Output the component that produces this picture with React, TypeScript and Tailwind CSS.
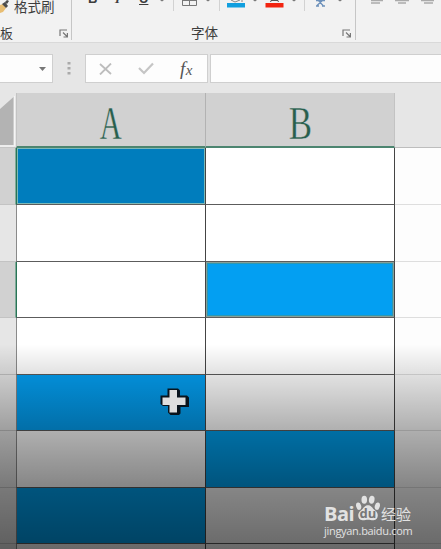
import React from "react";
import clsx from "clsx";

type RowData = {
  height: string;
  selected?: boolean;
  a: string;
  b: string;
};

const rows: RowData[] = [
  {
    height: "h-[57px]",
    selected: true,
    a: "bg-[#007dbd] shadow-[inset_0_0_0_1px_#7db9b8]",
    b: "bg-white",
  },
  { height: "h-[57px]", a: "bg-white", b: "bg-white" },
  {
    height: "h-[56px]",
    selected: true,
    a: "bg-white",
    b: "bg-[#039ff2] shadow-[inset_0_0_0_1px_#86a09a,inset_0_0_0_2px_#2f97b0]",
  },
  { height: "h-[57px]", a: "bg-white", b: "bg-white" },
  { height: "h-[56px]", a: "bg-[#03a0f3]", b: "bg-white" },
  { height: "h-[57px]", a: "bg-white", b: "bg-[#00a0ee]" },
  { height: "h-[56px]", a: "bg-[#00a0ee]", b: "bg-white" },
  { height: "h-[6px]", a: "bg-white", b: "bg-white" },
];

const Launcher = () => (
  <svg width="10" height="9" viewBox="0 0 10 9" fill="none" stroke="#777" strokeWidth="1.2">
    <path d="M1 7V1h7" />
    <path d="M4 3.5l4 4M8.4 4v4H4.5" />
  </svg>
);

const Caret = () => (
  <svg width="4" height="2" viewBox="0 0 4 2" fill="#777">
    <path d="M0 0h4L2 1.500z" />
  </svg>
);

const ClipboardGroup = () => (
  <div className="flex h-[40px] w-[72px] flex-col justify-between border-r border-[#c6c6c6]">
    <div className="flex gap-[5px]">
      <svg width="9" height="14" viewBox="0 0 9 14">
        <path d="M0 5l3-1 3 4-3 4-3 1z" fill="#e8bd72" />
        <path d="M2 4l3-2 3 4-2 2zM5 2l2-2 2 1-2 3z" fill="#4b4b4b" />
      </svg>
      <span className="text-[13.5px] leading-[15px]">格式刷</span>
    </div>
    <div className="flex items-center justify-between pr-[2px]">
      <span className="leading-[13px]">板</span>
      <Launcher />
    </div>
  </div>
);

const FontGroup = () => (
  <div className="flex h-[40px] w-[284px] flex-col justify-between border-r border-[#c6c6c6]">
    <div className="flex h-[11px] overflow-hidden">
      {/* only the lower edge of the B / I / U buttons is in view */}
      <div className="-mt-[8px] flex w-[88px] pl-[16px] font-bold leading-[14px]">
        <span className="w-[27px]">B</span>
        <span className="w-[24px] font-['Liberation_Serif',serif] italic">I</span>
        <span className="underline">U</span>
      </div>
      <Caret />
      <svg className="ml-[9px]" width="178" height="11" viewBox="173 0 178 11" fill="none">
        <path d="M173.500 0v11M219.500 0v11M304.500 0v11" stroke="#d2d2d2" />
        <path d="M182.500 0v5.500h14V0M189.500 0v5M182 0.500h15" stroke="#777" />
        <path d="M206 0h4l-2 1.500zM253 0h4l-2 1.500zM292 0h4l-2 1.500zM338 0h4l-2 1.500z" fill="#777" />
        {/* fill colour */}
        <path d="M231 0l4 2 5-2M242 0v2" stroke="#888" />
        <rect x="227" y="3" width="18" height="4.500" fill="#119fdf" />
        {/* font colour */}
        <path d="M270.500 2l1-2M278.500 2l-1-2M271 0.500h7" stroke="#555" />
        <rect x="265.500" y="3" width="18" height="4.500" fill="#f22410" />
        {/* phonetic guide */}
        <path
          d="M316 0.500h9M318 0l5 5.500M323 0l-6 5.500M316 6h3M322 6h3"
          stroke="#6d91bb"
          strokeWidth="1.300"
        />
      </svg>
    </div>
    <div className="flex items-center justify-between pl-[119px] pr-[3px]">
      <span className="text-[13.5px] leading-[13px]">字体</span>
      <Launcher />
    </div>
  </div>
);

const AlignGroup = () => (
  <svg className="ml-[15px]" width="65" height="5" viewBox="371 0 65 5" fill="none">
    <path
      d="M371 0.500h12M371 3h9M395 0.500h14M398 3h8M421 0.500h13M424 3h9"
      stroke="#aaa"
      strokeWidth="1.300"
    />
  </svg>
);

const Ribbon = () => (
  <div className="flex h-[43px] shrink-0 overflow-hidden border-b border-[#d9d9d9] bg-[#f2f2f2] text-[13px] text-[#3d3d3d]">
    <ClipboardGroup />
    <FontGroup />
    <AlignGroup />
  </div>
);

const FormulaBar = () => (
  <div className="flex h-[50px] shrink-0 pt-[11px]">
    <div className="flex h-[29px] w-[53px] items-center justify-end border border-l-0 border-[#cfcfcf] bg-[#fdfdfd] pr-[6px]">
      <svg width="7" height="4" viewBox="0 0 7 4">
        <path d="M0 0h7L3.500 4z" fill="#777" />
      </svg>
    </div>
    <div className="flex h-[29px] w-[32px] items-center justify-center">
      <svg width="4" height="13" viewBox="0 0 4 13" fill="#aaa">
        <path d="M0.500 0h3v2.500h-3zM0.500 5h3v2.500h-3zM0.500 10h3v2.500h-3z" />
      </svg>
    </div>
    <div className="flex h-[29px] w-[123px] items-center justify-between border border-[#cfcfcf] bg-[#fdfdfd] pl-[13px] pr-[14px]">
      <svg width="13" height="12" viewBox="0 0 13 12" fill="none" stroke="#bdbdbd" strokeWidth="1.800">
        <path d="M1 1l11 10M12 0.500L1 11.500" />
      </svg>
      <svg width="16" height="13" viewBox="0 0 16 13" fill="none" stroke="#c5c5c5" strokeWidth="2.200">
        <path d="M1 6l5 5 9-9.500" />
      </svg>
      <span className="whitespace-nowrap font-['Liberation_Serif',serif] text-[19px] italic leading-none tracking-[0.5px] text-[#555]">
        f<span className="text-[15px]">x</span>
      </span>
    </div>
    <div className="ml-[2px] h-[29px] flex-1 border border-r-0 border-[#cfcfcf] bg-[#fdfdfd]" />
  </div>
);

const ColumnHeaders = () => (
  <div className="flex h-[55px] shrink-0 font-['Liberation_Serif',serif] text-[46px] leading-none text-[#285f4d]">
    <div className="w-[16px] shrink-0 border-b border-[#c5c5c5]">
      <svg width="16" height="54" viewBox="0 0 16 54">
        <path d="M0 16L13.500 4v48H0z" fill="#b3b3b3" />
        <path d="M14.500 3v50H0" fill="none" stroke="#f5f5f5" />
      </svg>
    </div>
    <div className="flex w-[190px] shrink-0 justify-center border-x border-b-2 border-l-[#c3c3c3] border-r-[#b2b2b2] border-b-[#4c8570] bg-[#d1d1d1] pt-[8px]">
      <span className="scale-x-[0.66] [-webkit-text-stroke:0.4px_#d1d1d1]">A</span>
    </div>
    <div className="flex w-[189px] shrink-0 justify-center border-b-2 border-r border-r-[#c3c3c3] border-b-[#4c8570] bg-[#d1d1d1] pt-[8px]">
      <span className="scale-x-[0.76] [-webkit-text-stroke:0.4px_#d1d1d1]">B</span>
    </div>
    <div className="flex-1 border-b border-[#bdbdbd]" />
  </div>
);

const Row = ({ row }: { row: RowData }) => (
  <div className={clsx("flex shrink-0", row.height)}>
    <div
      className={clsx(
        "w-[16px] shrink-0 border-b border-b-[#c3c3c3]",
        row.selected ? "border-r border-r-[#7fab99] bg-[#d1d1d1]" : "bg-[#e6e6e6]"
      )}
    />
    <div
      className={clsx(
        "w-[190px] shrink-0 border-x border-b border-b-[#5c5c5c] border-r-[#444]",
        row.selected ? "border-l-[#287456]" : "border-l-[#8a8a8a]",
        row.a
      )}
    />
    <div
      className={clsx(
        "w-[189px] shrink-0 border-b border-r border-b-[#5c5c5c] border-r-[#444]",
        row.b
      )}
    />
    <div className="flex-1 border-b border-[#dedede] bg-[#fdfdfd]" />
  </div>
);

const Cursor = () => (
  <svg className="absolute left-[160px] top-[387px]" width="30" height="30" viewBox="0 0 30 30">
    <path d="M7.500 1.500h10.500l2 2v5h7l2 2v9.500h-8.500v6.500l-1.500 1.500h-8.500l-2.500-2.500v-6.500H3l-2.500-2v-8.500h7z" fill="#08131c" />
    <path d="M9.500 3h7.500v7.500h8.500v7.500H17v7.500H9.500v-7.500H2.500v-7.500h7z" fill="#dedede" />
  </svg>
);

const Watermark = () => (
  <div className="absolute bottom-[10px] left-[324px] flex flex-col font-['Open_Sans','Noto_Sans_CJK_SC',sans-serif] leading-none text-[#e2e2e2]">
    <div className="flex h-[28px] items-end">
      <span className="w-[31px] text-[20px] font-bold leading-[19px] tracking-[-0.5px]">Bai</span>
      <div className="flex h-[28px] w-[26px] items-end justify-center">
        <svg className="-mr-[26px] shrink-0" width="26" height="28" viewBox="0 0 26 30" fill="#e2e2e2">
          <ellipse cx="3" cy="12" rx="2.700" ry="4" transform="rotate(-15 3 12)" />
          <ellipse cx="9" cy="5" rx="3" ry="4.300" />
          <ellipse cx="17" cy="5" rx="3" ry="4.300" transform="rotate(8 17 5)" />
          <ellipse cx="23" cy="12" rx="2.700" ry="4" transform="rotate(15 23 12)" />
          <path d="M13 11c-4 0-5 4-8 6-4 3-3 10 2 10 3 0 4-.6 6-.6s3 .6 6 .6c5 0 6-7 2-10-3-2-4-6-8-6z" />
        </svg>
        <span className="z-10 w-[26px] shrink-0 pb-[3px] text-center text-[13px] font-bold leading-[14px] text-[#777]">
          du
        </span>
      </div>
      <span className="pb-[1px] text-[15px] leading-[16px]">经验</span>
    </div>
    <span className="h-[16px] text-[11px] leading-[16px] tracking-[-0.3px]">jingyan.baidu.com</span>
  </div>
);

const App = () => (
  <div className="relative flex h-[549px] w-[441px] flex-col overflow-hidden bg-[#e6e6e6] font-['Liberation_Sans','Noto_Sans_CJK_SC',sans-serif]">
    <Ribbon />
    <FormulaBar />
    <ColumnHeaders />
    {rows.map((row, index) => (
      <Row key={index} row={row} />
    ))}
    <div className="absolute inset-x-0 bottom-0 h-[205px] bg-[linear-gradient(to_bottom,transparent_0%,rgba(0,0,0,0.11)_14%,rgba(0,0,0,0.31)_42%,rgba(0,0,0,0.47)_69%,rgba(0,0,0,0.59)_100%)]" />
    <Cursor />
    <Watermark />
  </div>
);

export default App;
